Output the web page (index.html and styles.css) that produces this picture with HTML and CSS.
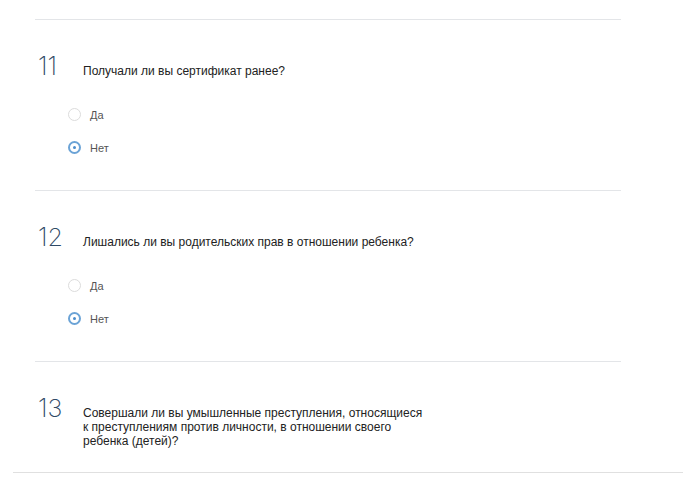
FILE: index.html
```html
<!DOCTYPE html>
<html lang="ru">
<head>
    <meta charset="UTF-8">
    <meta name="viewport" content="width=device-width, initial-scale=1.0">
    <title>Анкета</title>
    <link rel="stylesheet" href="styles.css">
</head>
<body>
    <div class="form">
        <div class="question">
            <div class="q-head">
                <span class="q-num">11</span>
                <span class="q-text">Получали ли вы сертификат ранее?</span>
            </div>
            <div class="options">
                <label class="option"><span class="radio"></span>Да</label>
                <label class="option"><span class="radio checked"></span>Нет</label>
            </div>
        </div>

        <div class="question">
            <div class="q-head">
                <span class="q-num">12</span>
                <span class="q-text">Лишались ли вы родительских прав в отношении ребенка?</span>
            </div>
            <div class="options">
                <label class="option"><span class="radio"></span>Да</label>
                <label class="option"><span class="radio checked"></span>Нет</label>
            </div>
        </div>

        <div class="question last">
            <div class="q-head">
                <span class="q-num">13</span>
                <span class="q-text small">Совершали ли вы умышленные преступления, относящиеся к преступлениям против личности, в отношении своего ребенка (детей)?</span>
            </div>
        </div>
    </div>
    <div class="page-rule"></div>
</body>
</html>
```

FILE: styles.css
```css
body {
    margin: 0;
    font-family: "Liberation Sans", Arial, sans-serif;
    background: #fff;
    color: #222;
}
.form {
    width: 586px;
    margin-left: 35px;
    padding-top: 19px;
}
.question {
    border-top: 1px solid #e3e5e8;
    padding: 31px 0 32px;
    height: 107px;
}
.question.last {
    height: 79px;
    padding-bottom: 0;
}
.q-head {
    display: flex;
    align-items: baseline;
}
.q-num {
    width: 48px;
    padding-left: 3px;
    box-sizing: border-box;
    font-family: Inter, Roboto, sans-serif;
    font-weight: 200;
    font-size: 25px;
    line-height: 30px;
    color: #2f4a66;
}
.q-text {
    font-size: 12px;
    color: #222;
}
.q-text.small {
    line-height: 14px;
    max-width: 340px;
}
.options {
    padding-left: 33px;
    margin-top: 27px;
    display: flex;
    flex-direction: column;
    gap: 20px;
}
.option {
    display: flex;
    align-items: center;
    gap: 9px;
    font-size: 11px;
    color: #555;
    height: 13px;
}
.radio {
    width: 13px;
    height: 13px;
    box-sizing: border-box;
    border: 1px solid #dcdcdc;
    border-radius: 50%;
    display: flex;
    align-items: center;
    justify-content: center;
}
.radio.checked {
    border: 2px solid #6ba3d6;
}
.radio.checked::after {
    content: "";
    width: 3px;
    height: 3px;
    border-radius: 50%;
    background: #4a8ccc;
}
.page-rule {
    margin: 0 15px 0 13px;
    border-top: 1px solid #e0e0e0;
}
```
